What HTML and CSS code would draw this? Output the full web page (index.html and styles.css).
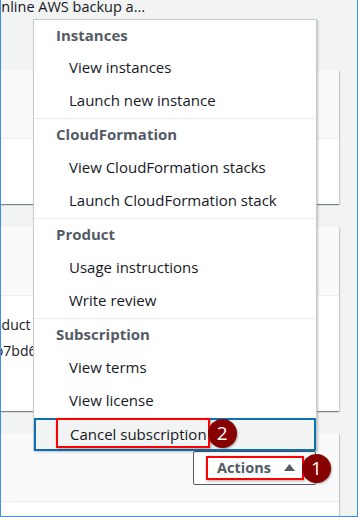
FILE: index.html
```html
<!DOCTYPE html>
<html lang="en">
<head>
    <meta charset="UTF-8">
    <meta name="viewport" content="width=device-width, initial-scale=1.0">
    <title>Manage subscriptions</title>
    <link rel="stylesheet" href="styles.css">
</head>
<body>
    <div class="screen">
        <div class="page">
            <h1 class="page-title">Online AWS backup a...</h1>

            <section class="card">
                <div class="card-header"></div>
                <div class="card-body card-body-short"></div>
            </section>

            <section class="card">
                <div class="card-header"></div>
                <div class="card-body card-body-tall">
                    <div class="field-label">Product code</div>
                    <div class="field-value">a3b7bd6e9c1</div>
                </div>
            </section>

            <section class="card">
                <div class="card-header card-actions">
                    <button class="btn-actions" type="button">
                        <span class="callout">
                            Actions
                            <svg class="caret" width="11" height="7" viewBox="0 0 11 7"><polygon points="5.5,0 11,7 0,7" fill="#545b64"/></svg>
                            <span class="badge">1</span>
                        </span>
                    </button>
                </div>
                <div class="card-body"></div>
            </section>
        </div>

        <!-- Menú desplegable de acciones -->
        <div class="menu">
            <div class="menu-group">
                <div class="menu-heading">Instances</div>
                <div class="menu-item">View instances</div>
                <div class="menu-item">Launch new instance</div>
            </div>
            <div class="menu-group">
                <div class="menu-heading">CloudFormation</div>
                <div class="menu-item">View CloudFormation stacks</div>
                <div class="menu-item">Launch CloudFormation stack</div>
            </div>
            <div class="menu-group">
                <div class="menu-heading">Product</div>
                <div class="menu-item">Usage instructions</div>
                <div class="menu-item">Write review</div>
            </div>
            <div class="menu-group">
                <div class="menu-heading">Subscription</div>
                <div class="menu-item">View terms</div>
                <div class="menu-item">View license</div>
                <div class="menu-item menu-item-active">
                    <span class="callout">Cancel subscription<span class="badge">2</span></span>
                </div>
            </div>
        </div>
    </div>
</body>
</html>
```

FILE: styles.css
```css
:root {
    --color-bg: #f2f3f3;
    --color-text: #16191f;
    --color-muted: #545b64;
    --color-line: #eaeded;
    --color-frame: #3d8fe6;
    --color-focus: #0f6fb5;
    --color-mark: #ff0000;
    --color-badge: #860000;
}

* {
    margin: 0;
    padding: 0;
    box-sizing: border-box;
    font-family: 'Open Sans', 'Noto Sans', sans-serif;
}

body {
    background-color: var(--color-bg);
    color: var(--color-text);
}

.screen {
    position: relative;
    width: 358px;
    height: 517px;
    overflow: hidden;
    background-color: var(--color-bg);
    border: 1px solid var(--color-frame);
    border-top: none;
}

.page {
    margin-left: -40px;
    padding-right: 18px;
}

.page-title {
    font-size: 14.5px;
    font-weight: 400;
    line-height: 20px;
    margin: -3px 0 53px 29px;
}

.card {
    background-color: #ffffff;
    margin-bottom: 23px;
    box-shadow: 0 1px 1px 0 rgba(0, 28, 36, 0.3),
                1px 1px 1px 0 rgba(0, 28, 36, 0.15),
                -1px 1px 1px 0 rgba(0, 28, 36, 0.15);
}

.card-header {
    height: 69px;
    background-color: #fafafa;
    border-bottom: 1px solid var(--color-line);
}

.card-body {
    height: 60px;
}

.card-body-short {
    height: 65px;
}

.card-body-tall {
    height: 115px;
    padding: 19px 0 0 18px;
    font-size: 14px;
    line-height: 20px;
}

.field-value {
    margin-top: 6px;
}

.card-actions {
    height: 68px;
    display: flex;
    align-items: center;
    justify-content: flex-end;
    padding-right: 23px;
}

.btn-actions {
    height: 34px;
    width: 123px;
    padding-left: 12px;
    display: flex;
    align-items: center;
    background-color: #ffffff;
    border: 1px solid var(--color-muted);
    border-radius: 2px;
    font-size: 14.5px;
    font-weight: 700;
    color: var(--color-muted);
}

.btn-actions .callout {
    padding: 0 7px 0 9px;
    height: 24px;
    line-height: 20px;
    gap: 13px;
}

.caret {
    display: block;
}

/* Menú */
.menu {
    position: absolute;
    left: 32px;
    top: 19px;
    width: 284px;
    background-color: #ffffff;
    border: 1px solid #c6cbcb;
    border-bottom: none;
    box-shadow: 1px 1px 2px rgba(0, 28, 36, 0.25);
}

.menu-group + .menu-group {
    border-top: 1px solid var(--color-line);
}

.menu-heading,
.menu-item {
    height: 33px;
    line-height: 31px;
    font-size: 15px;
}

.menu-heading {
    line-height: 31px;
    padding-left: 22px;
    font-weight: 700;
    color: var(--color-muted);
}

.menu-group:first-child .menu-heading {
    height: 32px;
    line-height: 30px;
}

.menu-item {
    padding-left: 35px;
    color: var(--color-text);
}

.menu-item-active {
    height: 33px;
    display: flex;
    align-items: flex-start;
    padding-left: 20px;
    background-color: var(--color-bg);
    border: 2px solid var(--color-focus);
}

.menu-item-active .callout {
    margin-top: -2px;
    padding: 4px 1px 2px 12px;
    line-height: 20px;
}

/* Anotaciones */
.callout {
    position: relative;
    display: flex;
    align-items: center;
    border: 2px solid var(--color-mark);
    box-shadow: 1px 1px 3px rgba(0, 0, 0, 0.35);
}

.badge {
    position: absolute;
    left: 100%;
    top: 50%;
    width: 29px;
    height: 29px;
    margin: -14px 0 0 0;
    border-radius: 50%;
    background-color: var(--color-badge);
    color: #ffffff;
    font-size: 19px;
    font-weight: 400;
    line-height: 29px;
    text-align: center;
    box-shadow: 1px 1px 2px rgba(0, 0, 0, 0.3);
}
```
